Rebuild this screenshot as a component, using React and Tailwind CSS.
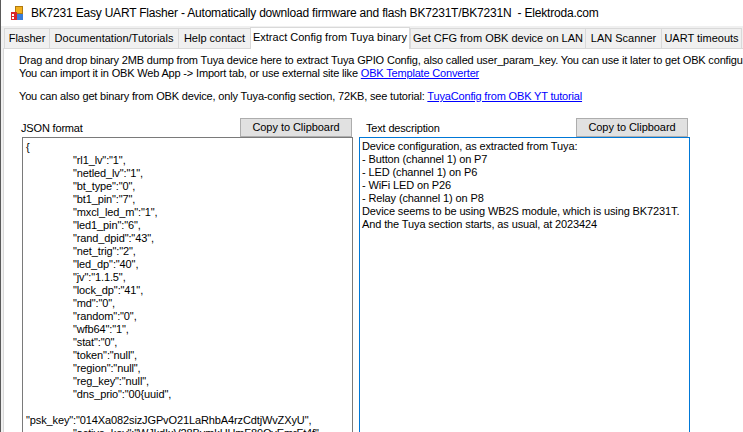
import React from "react";

const jsonLines = [
  '"rl1_lv":"1",',
  '"netled_lv":"1",',
  '"bt_type":"0",',
  '"bt1_pin":"7",',
  '"mxcl_led_m":"1",',
  '"led1_pin":"6",',
  '"rand_dpid":"43",',
  '"net_trig":"2",',
  '"led_dp":"40",',
  '"jv":"1.1.5",',
  '"lock_dp":"41",',
  '"md":"0",',
  '"random":"0",',
  '"wfb64":"1",',
  '"stat":"0",',
  '"token":"null",',
  '"region":"null",',
  '"reg_key":"null",',
  '"dns_prio":"00{uuid",',
];

const descLines = [
  "Device configuration, as extracted from Tuya:",
  "- Button (channel 1) on P7",
  "- LED (channel 1) on P6",
  "- WiFi LED on P26",
  "- Relay (channel 1) on P8",
  "Device seems to be using WB2S module, which is using BK7231T.",
  "And the Tuya section starts, as usual, at 2023424",
];

const tabs = [
  { label: "Flasher", w: "w-[45px]" },
  { label: "Documentation/Tutorials", w: "w-[129px]" },
  { label: "Help contact", w: "w-[72px]" },
  { label: "Extract Config from Tuya binary", w: "w-[160px]", active: true },
  { label: "Get CFG from OBK device on LAN", w: "w-[175px]" },
  { label: "LAN Scanner", w: "w-[76px]" },
  { label: "UART timeouts", w: "w-[81px]" },
];

function AppIcon() {
  return (
    <svg width="12" height="14" viewBox="0 0 12 14">
      <rect x="4.5" y="0.5" width="7" height="7" fill="#f2b01e" stroke="#b07a10" strokeWidth="1" />
      <rect x="5" y="8" width="7" height="6" fill="#3b7dd8" />
      <rect x="0" y="6" width="6" height="8" fill="#d8262b" />
      <rect x="1" y="8" width="2" height="2" fill="#ffffff" />
      <rect x="1" y="11" width="2" height="2" fill="#ffffff" />
    </svg>
  );
}

function CopyButton() {
  return (
    <div className="w-[112px] h-[19px] bg-[#e1e1e1] border border-[#adadad] flex items-center justify-center text-[11px] tracking-[-0.05px] text-black">
      Copy to Clipboard
    </div>
  );
}

export default function App() {
  return (
    <div
      className="w-[743px] h-[432px] overflow-hidden bg-[#f0f0f0] flex flex-col text-black border-l border-[#5a5a5a]"
      style={{ fontFamily: '"Liberation Sans", Arial, sans-serif' }}
    >
      {/* Title bar */}
      <div className="h-[26px] bg-white flex items-center pl-[10px] shrink-0">
        <AppIcon />
        <span className="ml-[8px] text-[12px] tracking-[-0.2px] whitespace-nowrap text-black">
          BK7231 Easy UART Flasher - Automatically download firmware and flash BK7231T/BK7231N&nbsp;&nbsp;- Elektroda.com
        </span>
      </div>

      {/* Tab strip */}
      <div className="h-[22px] flex items-end pl-[3px] shrink-0 bg-[#f0f0f0]">
        {tabs.map((t) =>
          t.active ? (
            <div
              key={t.label}
              className={`${t.w} h-[22px] bg-white border-t border-l border-r border-[#d9d9d9] flex items-center justify-center text-[11px] whitespace-nowrap -mb-px relative z-10 pb-[3px]`}
            >
              {t.label}
            </div>
          ) : (
            <div
              key={t.label}
              className={`${t.w} h-[20px] bg-[#f0f0f0] border-t border-l border-[#d9d9d9] last:border-r flex items-center justify-center text-[11px] whitespace-nowrap`}
            >
              {t.label}
            </div>
          )
        )}
      </div>

      {/* Tab page */}
      <div className="flex-1 bg-white border-t border-l border-[#d9d9d9] ml-[2px] pl-[15px] pt-[5px] text-[11px] tracking-[-0.17px] leading-[13px] whitespace-nowrap overflow-hidden">
        <div>
          Drag and drop binary 2MB dump from Tuya device here to extract Tuya GPIO Config, also called user_param_key. You can use it later to get OBK configuration.
        </div>
        <div>
          You can import it in OBK Web App -&gt; Import tab, or use external site like{" "}
          <span className="text-[#0000ff] underline">OBK Template Converter</span>
        </div>
        <div className="mt-[10px]">
          You can also get binary from OBK device, only Tuya-config section, 72KB, see tutorial:{" "}
          <span className="text-[#0000ff] underline">TuyaConfig from OBK YT tutorial</span>
        </div>

        <div className="flex mt-[15px] ml-[3px]">
          {/* Left panel */}
          <div className="w-[331px] flex flex-col">
            <div className="flex items-end justify-between h-[19px]">
              <span className="mb-[2px] -ml-[1px]">JSON format</span>
              <div className="mr-[1px]">
                <CopyButton />
              </div>
            </div>
            <div className="h-[320px] border border-[#7a7a7a] pl-[3px] pt-[3px] text-[11px] tracking-[-0.12px] leading-[13px] overflow-hidden">
              <div>{"{"}</div>
              {jsonLines.map((l) => (
                <div key={l} className="pl-[47px]">
                  {l}
                </div>
              ))}
              <div className="h-[13px]" />
              <div>"psk_key":"014Xa082sizJGPvO21LaRhbA4rzCdtjWvZXyU",</div>
              <div className="pl-[47px]">"active_key":"WJkdIxV28BvmkHHmF89QvEmrFt4f",</div>
            </div>
          </div>

          {/* Right panel */}
          <div className="w-[331px] ml-[6px] flex flex-col">
            <div className="flex items-end justify-between h-[19px]">
              <span className="mb-[2px] ml-[7px]">Text description</span>
              <div className="mr-[2px]">
                <CopyButton />
              </div>
            </div>
            <div className="h-[320px] border border-[#0078d7] pl-[2px] pt-[2px] text-[11px] tracking-[-0.12px] leading-[13px] overflow-hidden">
              {descLines.map((l) => (
                <div key={l}>{l}</div>
              ))}
            </div>
          </div>
        </div>
      </div>
    </div>
  );
}
